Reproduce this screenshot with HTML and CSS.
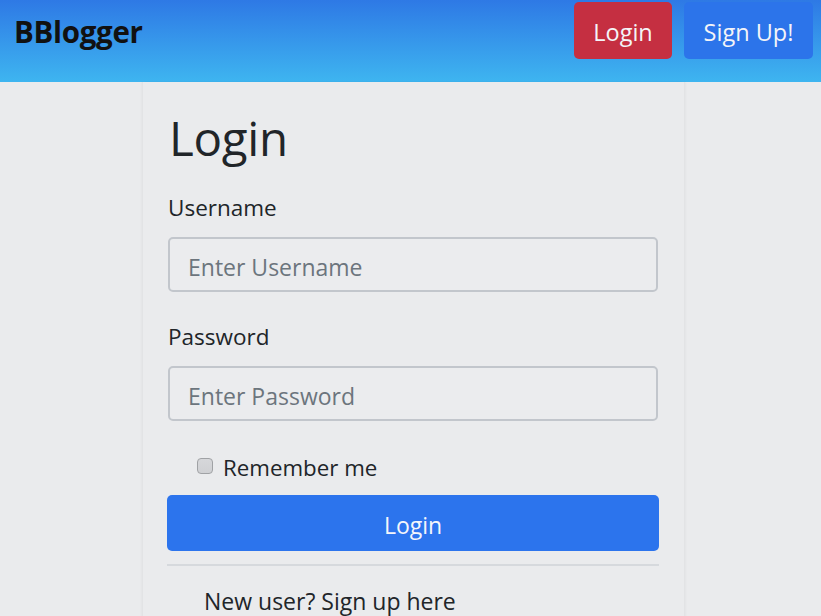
FILE: index.html
```html
<!DOCTYPE html>
<html lang="en">
<head>
<meta charset="utf-8">
<title>BBlogger - Login</title>
<link rel="stylesheet" href="styles.css">
</head>
<body>
<nav class="navbar">
  <a class="brand" href="#">BBlogger</a>
  <div class="nav-actions">
    <a class="btn btn-red" href="#">Login</a>
    <a class="btn btn-blue" href="#">Sign Up!</a>
  </div>
</nav>
<main class="card">
  <h1 class="title">Login</h1>
  <form class="form">
    <label class="label" for="u">Username</label>
    <input class="input" id="u" type="text" placeholder="Enter Username">
    <label class="label" for="p">Password</label>
    <input class="input" id="p" type="password" placeholder="Enter Password">
    <div class="check-row">
      <input class="check" type="checkbox" id="r">
      <label class="check-label" for="r">Remember me</label>
    </div>
    <button class="submit" type="button">Login</button>
  </form>
  <hr class="rule">
  <p class="signup">New user? Sign up here</p>
</main>
</body>
</html>
```
FILE: styles.css
```css
html, body {
  margin: 0;
  padding: 0;
}
body {
  background: #eaebed;
  font-family: "Open Sans", "Noto Sans", sans-serif;
  color: #212529;
}
.navbar {
  height: 82px;
  box-sizing: border-box;
  padding: 2px 8px 23px 14px;
  display: flex;
  align-items: center;
  justify-content: space-between;
  background: linear-gradient(to bottom, #2e79e5 0%, #3eb5f0 100%);
}
.brand {
  font-size: 29.5px;
  font-weight: 700;
  color: #111;
  text-decoration: none;
  letter-spacing: -0.3px;
  padding-top: 2px;
}
.nav-actions {
  display: flex;
  gap: 12px;
}
.btn {
  display: flex;
  align-items: center;
  justify-content: center;
  height: 57px;
  box-sizing: border-box;
  border-radius: 5px;
  color: #f4f4f8;
  text-decoration: none;
  font-size: 23.5px;
  padding: 2px 0 0;
}
.btn-red {
  background: #c52f41;
  width: 98px;
}
.btn-blue {
  background: #2c74ea;
  width: 129px;
}
.card {
  width: 541px;
  box-sizing: border-box;
  margin: 0 0 0 143px;
  padding: 24px 26px 20px 25px;
  box-shadow: 1px 0 0 #e2e3e5, -1px 0 0 #e2e3e5, 2px 0 2px rgba(0,0,0,0.03), -2px 0 2px rgba(0,0,0,0.03);
}
.title {
  margin: 0 0 22px 1px;
  font-size: 47.5px;
  font-weight: 500;
  line-height: 64px;
  letter-spacing: -0.3px;
}
.form {
  display: flex;
  flex-direction: column;
}
.label {
  font-size: 22.5px;
  line-height: 30px;
  margin: 1px 0 14px;
}
.input {
  height: 55px;
  box-sizing: border-box;
  border: 2px solid #c2c6cc;
  border-radius: 5px;
  background: #ebecee;
  font-family: inherit;
  font-size: 23px;
  padding: 4px 18px 0;
  margin: 0 0 29px;
  color: #495057;
}
.input::placeholder {
  color: #6c757d;
}
.check-row {
  display: flex;
  align-items: center;
  margin: 2px 0 13px 29px;
  height: 30px;
}
.check {
  appearance: none;
  -webkit-appearance: none;
  width: 16px;
  height: 16px;
  box-sizing: border-box;
  margin: -2px 10px 0 0;
  border: 1px solid #a0a2a5;
  border-radius: 4px;
  background: linear-gradient(#d6d7da, #cfd0d3);
}
.check-label {
  font-size: 22.3px;
}
.submit {
  height: 56px;
  border: none;
  border-radius: 5px;
  background: #2c74ed;
  color: #f4f6fb;
  font-family: inherit;
  font-size: 23px;
  padding-top: 4px;
  margin: 0 -1px;
}
.rule {
  margin: 13px -1px 0;
  border: none;
  border-top: 2px solid #d6d9dd;
}
.signup {
  margin: 23px 0 0 36px;
  font-size: 23px;
  line-height: 24px;
}
```
